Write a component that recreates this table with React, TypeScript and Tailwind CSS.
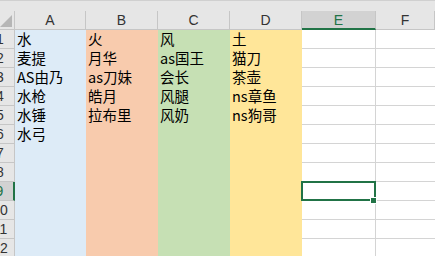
import React from "react";

type Col = {
  key: string;
  head: string;
  cell: string;
  values: string[];
};

const cellFont = { fontFamily: '"Noto Sans CJK SC", "Noto Sans", sans-serif' };
const headFont = { fontFamily: '"Liberation Sans", "Noto Sans CJK SC", sans-serif' };

const columns: Col[] = [
  {
    key: "A",
    head: "w-[71px]",
    cell: "w-[71px] bg-[#ddebf7] border-[#ddebf7]",
    values: ["水", "麦提", "AS由乃", "水枪", "水锤", "水弓"],
  },
  {
    key: "B",
    head: "w-[72px]",
    cell: "w-[72px] bg-[#f8cbad] border-[#f8cbad]",
    values: ["火", "月华", "as刀妹", "皓月", "拉布里"],
  },
  {
    key: "C",
    head: "w-[72px]",
    cell: "w-[72px] bg-[#c6e0b4] border-[#c6e0b4]",
    values: ["风", "as国王", "会长", "风腿", "风奶"],
  },
  {
    key: "D",
    head: "w-[72px]",
    cell: "w-[72px] bg-[#ffe699] border-[#ffe699]",
    values: ["土", "猫刀", "茶壶", "ns章鱼", "ns狗哥"],
  },
  {
    key: "E",
    head: "w-[74px]",
    cell: "w-[74px] bg-white border-r border-[#d4d4d4]",
    values: [],
  },
  {
    key: "F",
    head: "flex-1",
    cell: "flex-1 bg-white border-[#d4d4d4]",
    values: [],
  },
];

const ROWS = 12;
const ACTIVE_ROW = 9;
const ACTIVE_COL = "E";

function CornerCell() {
  return (
    <div className="w-[29px] h-[19px] shrink-0 border-r border-b border-[#c6c6c6] bg-[#e6e6e6] flex items-end justify-end pr-[2px] pb-[2px]">
      <svg width="12" height="12" viewBox="0 0 12 12">
        <polygon points="12,0 12,12 0,12" fill="#b6b6b6" />
      </svg>
    </div>
  );
}

function ColumnHeader({ col }: { col: Col }) {
  const active = col.key === ACTIVE_COL;
  return (
    <div
      style={headFont}
      className={
        active
          ? `${col.head} h-[19px] shrink-0 bg-[#d2d2d2] border-r border-[#c6c6c6] border-b-2 border-b-[#217346] text-[#217346] text-[14px] leading-[17px] pt-[1px] text-center`
          : `${col.head} h-[19px] shrink-0 bg-[#e6e6e6] border-r border-b border-[#c6c6c6] text-[#333333] text-[14px] leading-[17px] pt-[1px] text-center`
      }
    >
      {col.key}
    </div>
  );
}

function RowHeader({ n }: { n: number }) {
  const active = n === ACTIVE_ROW;
  return (
    <div
      style={headFont}
      className={
        active
          ? "w-[29px] h-[19px] shrink-0 bg-[#d2d2d2] border-b border-[#c6c6c6] border-r-2 border-r-[#217346] text-[#217346] text-[14px] leading-[17px] pt-[1px] text-center"
          : "w-[29px] h-[19px] shrink-0 bg-[#e6e6e6] border-b border-r border-[#c6c6c6] text-[#333333] text-[14px] leading-[17px] pt-[1px] text-center"
      }
    >
      {n}
    </div>
  );
}

function Cell({ col, row }: { col: Col; row: number }) {
  const value = col.values[row - 1] ?? "";
  const selected = col.key === ACTIVE_COL && row === ACTIVE_ROW;
  return (
    <div
      style={cellFont}
      className={`${col.cell} relative h-[19px] shrink-0 border-b pl-[2px] text-[14.5px] leading-[18px] text-black whitespace-nowrap`}
    >
      {value}
      {selected && (
        <>
          <div className="absolute z-10 -left-[1px] -top-[1px] -right-[1px] -bottom-[1px] border-2 border-[#217346] pointer-events-none" />
          <div className="absolute z-20 -right-[2px] -bottom-[4px] w-[7px] h-[7px] bg-[#217346] border border-white" />
        </>
      )}
    </div>
  );
}

export default function App() {
  const rows = Array.from({ length: ROWS }, (_, i) => i + 1);
  return (
    <div className="w-[435px] h-[256px] overflow-hidden bg-white">
      <div className="w-[449px] -ml-[14px] flex flex-col">
        <div className="h-[11px] bg-[#e6e6e6] border-t border-[#d0d0d0]" />
        <div className="flex">
          <CornerCell />
          {columns.map((c) => (
            <ColumnHeader key={c.key} col={c} />
          ))}
        </div>
        {rows.map((r) => (
          <div key={r} className="flex">
            <RowHeader n={r} />
            {columns.map((c) => (
              <Cell key={c.key} col={c} row={r} />
            ))}
          </div>
        ))}
      </div>
    </div>
  );
}
